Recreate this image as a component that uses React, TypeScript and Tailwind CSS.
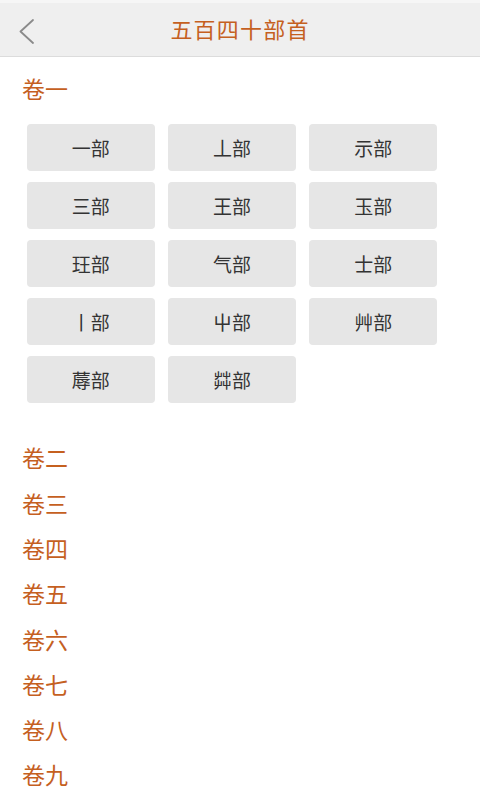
import React from "react";

const cells = ["一部", "丄部", "示部", "三部", "王部", "玉部", "玨部", "气部", "士部", "丨部", "屮部", "艸部", "蓐部", "茻部"];

const juan = ["卷二", "卷三", "卷四", "卷五", "卷六", "卷七", "卷八", "卷九"];

export default function App() {
  return (
    <div
      className="w-[480px] h-[800px] overflow-hidden bg-white"
      style={{ fontFamily: '"Noto Sans CJK SC", "Noto Sans", sans-serif' }}
    >
      <div className="relative h-[57px] bg-[#efefef] border-t-[3px] border-t-[#f6f6f6] border-b border-b-[#dcdcdc] flex items-center justify-center">
        <svg
          className="absolute left-[18px] top-[16px]"
          width="18"
          height="26"
          viewBox="0 0 18 26"
          fill="none"
        >
          <polyline
            points="15,1 2.5,12.5 15,24"
            stroke="#8a8a8a"
            strokeWidth="1.8"
            strokeLinecap="round"
            strokeLinejoin="round"
          />
        </svg>
        <span className="text-[22px] tracking-[1.2px] text-[#c5601f] leading-none -mt-[3px]">
          五百四十部首
        </span>
      </div>

      <div className="mt-[8px] h-[46px] flex items-center pl-[22px] text-[23px] text-[#c5601f]">
        卷一
      </div>

      <div className="mt-[13px] ml-[27px] w-[410px] grid grid-cols-3 gap-x-[13.5px] gap-y-[11px]">
        {cells.map((c, i) => (
          <div
            key={i}
            className="h-[47px] rounded-[4px] bg-[#e6e6e6] flex items-center justify-center text-[19px] text-[#333333] pt-[2px]"
          >
            {c}
          </div>
        ))}
      </div>

      <div className="mt-[32px] flex flex-col">
        {juan.map((j) => (
          <div
            key={j}
            className="h-[45.3px] flex items-center pl-[22px] text-[23px] text-[#c5601f]"
          >
            {j}
          </div>
        ))}
      </div>
    </div>
  );
}
